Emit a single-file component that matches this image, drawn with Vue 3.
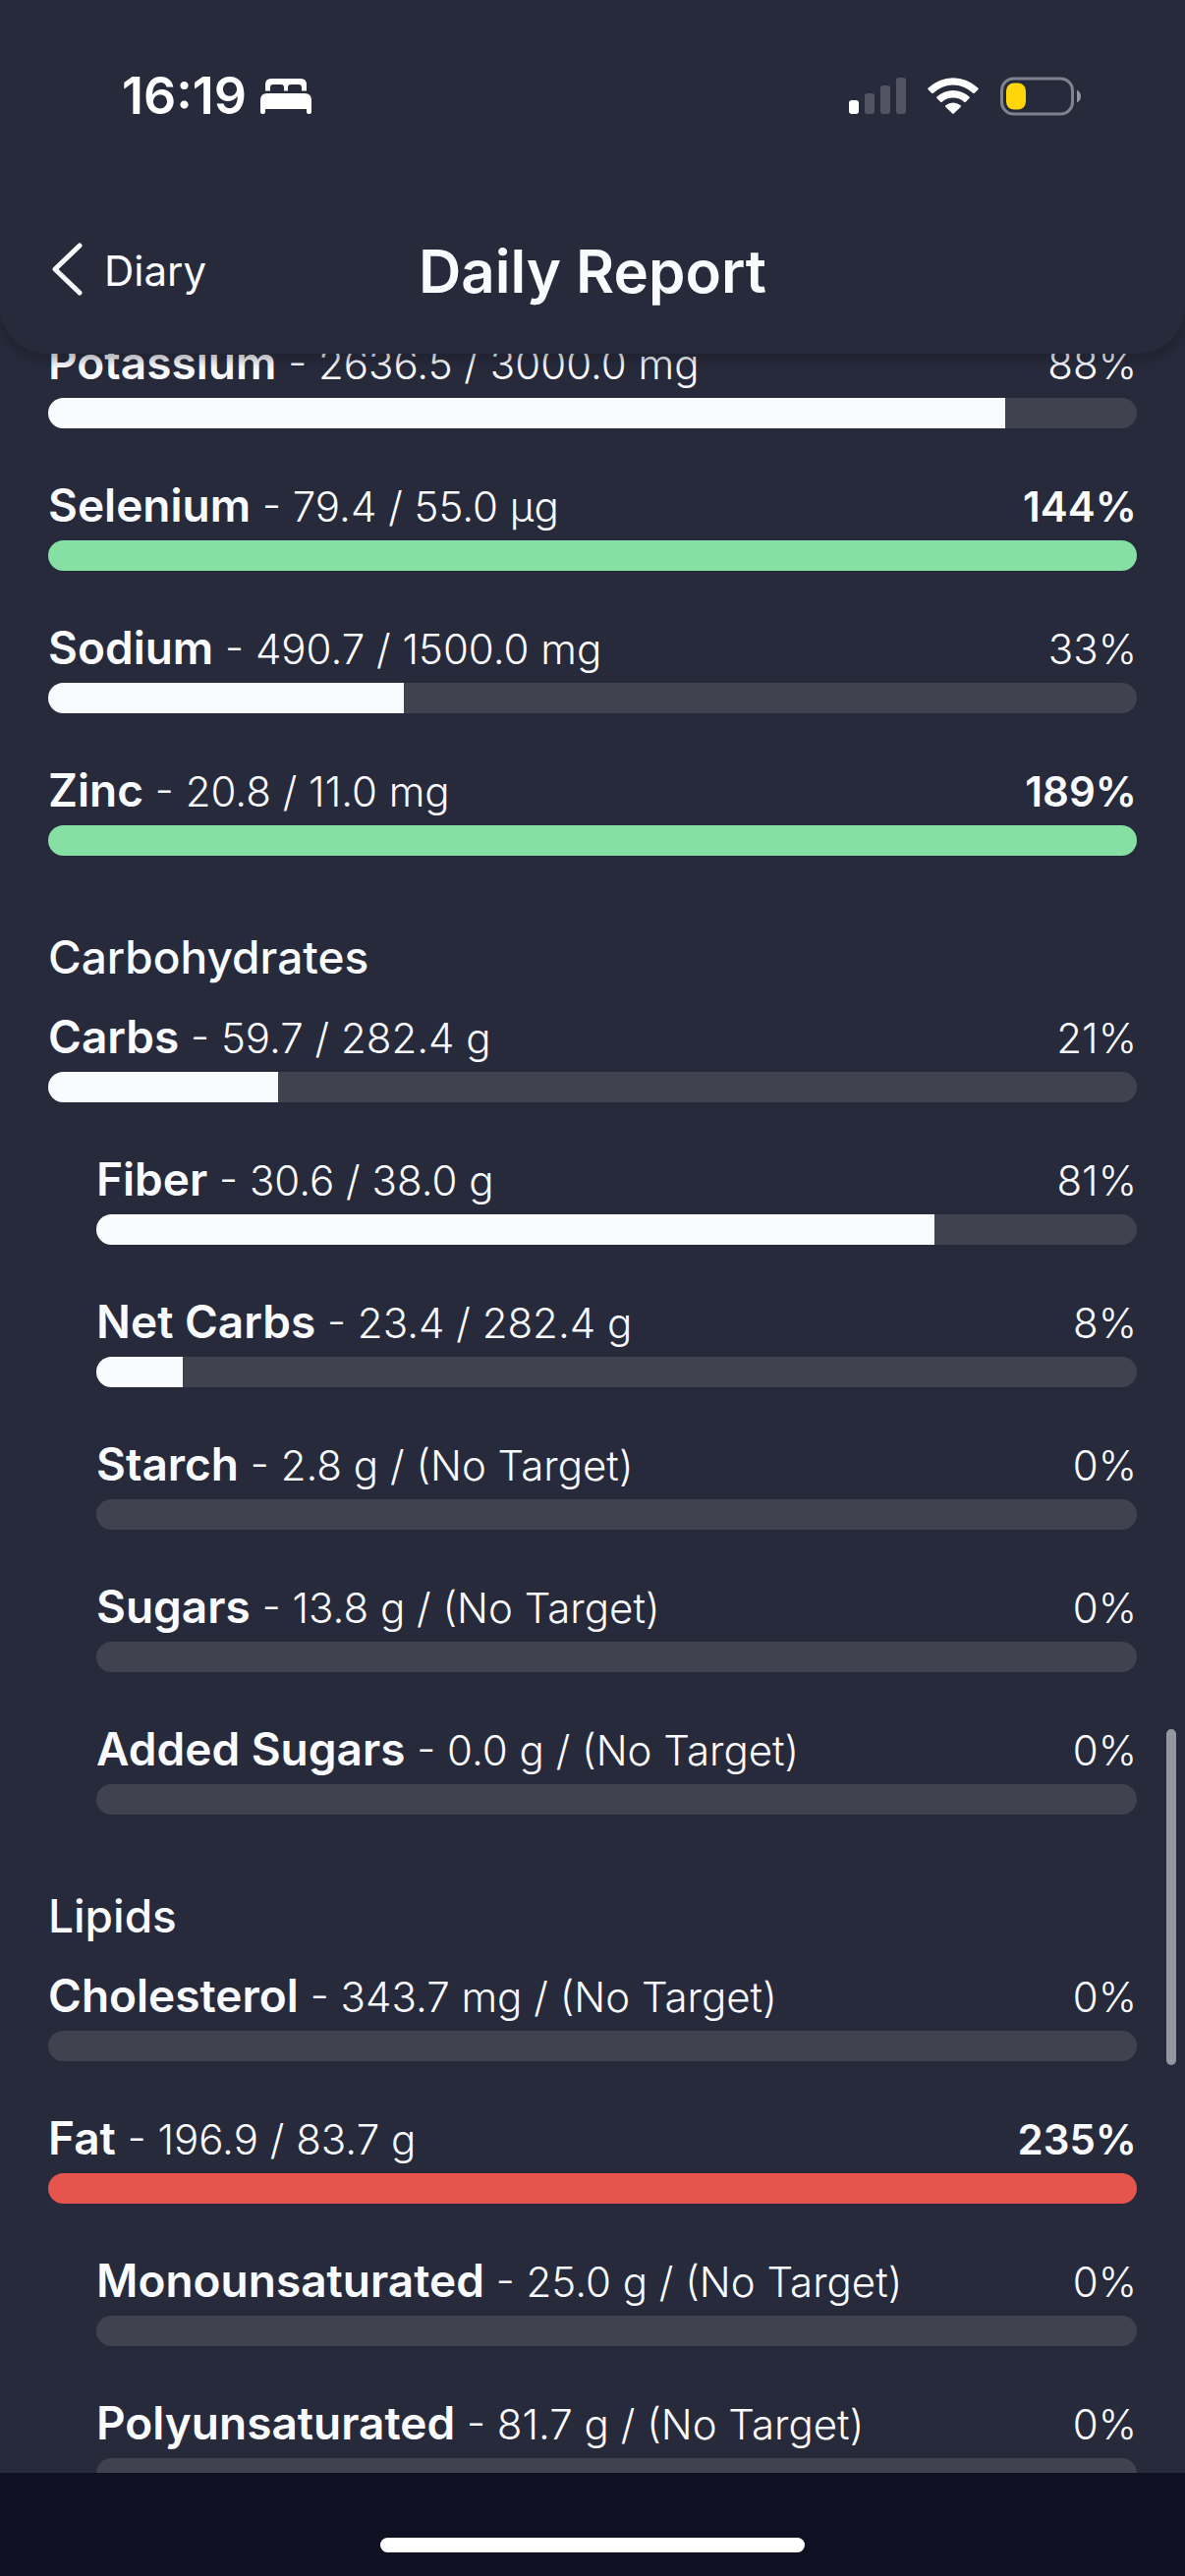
<script setup>
const sections = [
  {
    title: '',
    rows: [
      { name: 'Potassium', amount: 2636.5, target: 3000, unit: 'mg' },
      { name: 'Selenium', amount: 79.4, target: 55, unit: 'µg' },
      { name: 'Sodium', amount: 490.7, target: 1500, unit: 'mg' },
      { name: 'Zinc', amount: 20.8, target: 11, unit: 'mg' },
    ],
  },
  {
    title: 'Carbohydrates',
    rows: [
      { name: 'Carbs', amount: 59.7, target: 282.4, unit: 'g' },
      { name: 'Fiber', amount: 30.6, target: 38, unit: 'g', nested: true },
      { name: 'Net Carbs', amount: 23.4, target: 282.4, unit: 'g', nested: true },
      { name: 'Starch', amount: 2.8, unit: 'g', nested: true },
      { name: 'Sugars', amount: 13.8, unit: 'g', nested: true },
      { name: 'Added Sugars', amount: 0, unit: 'g', nested: true },
    ],
  },
  {
    title: 'Lipids',
    rows: [
      { name: 'Cholesterol', amount: 343.7, unit: 'mg' },
      { name: 'Fat', amount: 196.9, target: 83.7, unit: 'g', limited: true },
      { name: 'Monounsaturated', amount: 25, unit: 'g', nested: true },
      { name: 'Polyunsaturated', amount: 81.7, unit: 'g', nested: true },
    ],
  },
]

const ratio = (row) => (row.target ? (row.amount / row.target) * 100 : 0)
const percent = (row) => Math.round(ratio(row))
const fill = (row) => Math.min(ratio(row), 100)
const detail = (row) =>
  row.target
    ? `${row.amount.toFixed(1)} / ${row.target.toFixed(1)} ${row.unit}`
    : `${row.amount.toFixed(1)} ${row.unit} / (No Target)`
const tone = (row) => {
  if (ratio(row) < 100) return 'partial'
  return row.limited ? 'over' : 'met'
}
</script>

<template>
  <div class="screen">
    <header class="header">
      <div class="status">
        <div class="status-group">
          <time class="clock">16:19</time>
          <svg class="bed" width="52" height="36" viewBox="0 0 52 36" fill="#fff" aria-hidden="true">
            <path d="M5 12.500V6q0-6 6-6h30q6 0 6 6v6.500h-5V9q0-3-3-3H31q-3 0-3 3v3.500h-4V9q0-3-3-3h-8q-3 0-3 3v3.500z" />
            <path d="M0 22q0-7 7-7h38q7 0 7 7v12q0 2-2 2h-1q-2 0-2-2v-3H5v3q0 2-2 2H2q-2 0-2-2z" />
          </svg>
        </div>
        <div class="status-group indicators">
          <svg width="58" height="40" viewBox="0 0 58 40" fill="#fff" aria-hidden="true">
            <rect x="0" y="24" width="10" height="14" rx="3" />
            <g fill="#525463">
              <rect x="16" y="17" width="10" height="21" rx="3" />
              <rect x="32" y="9" width="10" height="29" rx="3" />
              <rect x="48" y="1" width="10" height="37" rx="3" />
            </g>
          </svg>
          <svg width="52" height="40" viewBox="0 0 52 40" fill="#fff" aria-hidden="true">
            <path d="M.7 11.6a36 36 0 0 1 50.6 0q.8.8 0 1.6l-3.500 3.500q-.8.8-1.600 0a29 29 0 0 0-40.400 0q-.8.8-1.600 0L.7 13.200q-.8-.8 0-1.600z" />
            <path d="M9.500 20.500a24 24 0 0 1 33 0q.8.8 0 1.600l-3.700 3.700q-.8.7-1.600 0a17 17 0 0 0-22.400 0q-.8.7-1.600 0l-3.700-3.700q-.8-.8 0-1.600z" />
            <path d="M18.400 29.200a12 12 0 0 1 15.200 0q.9.8 0 1.700l-6.800 6.700q-.8.8-1.600 0l-6.800-6.700q-.9-.9 0-1.700z" />
          </svg>
          <svg width="82" height="40" viewBox="0 0 82 40" aria-hidden="true">
            <rect x="1.500" y="2" width="72" height="36" rx="12" fill="none" stroke="#80828d" stroke-width="3" />
            <path d="M78 13.500q4 2 4 6.500t-4 6.500z" fill="#93959f" />
            <rect x="6" y="6.500" width="20" height="27" rx="8" fill="#ffd60a" />
          </svg>
        </div>
      </div>
      <nav class="nav">
        <a class="back" href="#diary">
          <svg width="32" height="60" viewBox="0 0 32 60" fill="none" stroke="#fafbff" stroke-width="5" stroke-linecap="round" stroke-linejoin="round" aria-hidden="true">
            <path d="M29 4 4 28l25 24" />
          </svg>
          <span>Diary</span>
        </a>
        <h1 class="title">Daily Report</h1>
      </nav>
    </header>

    <main class="report">
      <section v-for="section in sections" :key="section.title">
        <h2 v-if="section.title" class="section-title">{{ section.title }}</h2>
        <ul class="rows">
          <li v-for="row in section.rows" :key="row.name" class="row" :class="[{ nested: row.nested }, tone(row)]">
            <div class="caption">
              <span><strong class="name">{{ row.name }}</strong> - {{ detail(row) }}</span>
              <span class="percent">{{ percent(row) }}%</span>
            </div>
            <div class="track" role="progressbar" :aria-label="row.name" :aria-valuenow="percent(row)">
              <div class="fill" :style="{ width: fill(row) + '%' }"></div>
            </div>
          </li>
        </ul>
      </section>
      <div class="scroll-thumb"></div>
    </main>

    <footer class="home">
      <div class="home-indicator"></div>
    </footer>
  </div>
</template>

<style>
body {
  margin: 0;
  background: #272a3b;
}
</style>

<style scoped>
.screen {
  display: flex;
  flex-direction: column;
  height: 100vh;
  overflow: hidden;
  background: #272a3b;
  color: #fafbff;
  font-family: Inter, "Liberation Sans", sans-serif;
  font-size: 42px;
  line-height: 60px;
}

.header {
  position: relative;
  z-index: 1;
  flex: none;
  padding: 62px 50px 36px;
  border-radius: 0 0 48px 48px;
  background: #272a3b;
  box-shadow: 0 6px 12px rgba(20, 20, 28, 0.36);
}

.status {
  display: flex;
  align-items: center;
  justify-content: space-between;
  height: 72px;
  margin-bottom: 94px;
  padding: 0 56px 0 74px;
}

.status-group {
  display: flex;
  align-items: center;
  gap: 14px;
}

.indicators {
  gap: 22px;
}

.clock {
  color: #fff;
  font-size: 52px;
  font-weight: 600;
}

.nav {
  display: grid;
  grid-template-columns: 1fr auto 1fr;
  align-items: center;
  height: 96px;
}

.back {
  display: flex;
  align-items: center;
  gap: 22px;
  padding-left: 2px;
  color: inherit;
  text-decoration: none;
}

.title {
  margin: 0;
  font-size: 60px;
  font-weight: 600;
}

.report {
  position: relative;
  flex: 1;
  min-height: 0;
  margin-top: -48px;
  padding: 29px 49px 0;
  overflow: hidden;
}

.section-title {
  margin: 0;
  padding: 23px 0;
  font-size: 46px;
  font-weight: 500;
}

.rows {
  margin: 0;
  padding: 0;
  list-style: none;
}

.row {
  padding-bottom: 50px;
}

.nested {
  padding-left: 49px;
}

.caption {
  display: flex;
  justify-content: space-between;
  margin-bottom: 4px;
  font-weight: 300;
}

.name {
  font-size: 46px;
  font-weight: 600;
  line-height: 1;
}

.met .percent,
.over .percent {
  font-weight: 600;
}

.track {
  height: 31px;
  overflow: hidden;
  border-radius: 16px;
  background: #414250;
}

.fill {
  height: 100%;
  background: #fafbff;
}

.met .fill {
  background: #86e0a3;
}

.over .fill {
  background: #e5554d;
}

.scroll-thumb {
  position: absolute;
  top: 1448px;
  right: 9px;
  width: 10px;
  height: 342px;
  border-radius: 5px;
  background: #9496a0;
}

.home {
  display: flex;
  flex: none;
  align-items: flex-end;
  justify-content: center;
  height: 81px;
  padding-bottom: 24px;
  background: #0f1021;
}

.home-indicator {
  width: 432px;
  height: 15px;
  border-radius: 8px;
  background: #fff;
}
</style>
